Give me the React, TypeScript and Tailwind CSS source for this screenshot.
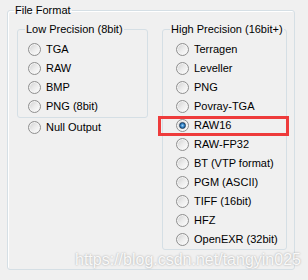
import React from 'react';

const Radio = ({ label, checked }: { label: string; checked?: boolean }) => (
  <div className="flex h-[19px] items-center gap-[5px] whitespace-nowrap">
    <span className="flex h-[13px] w-[13px] shrink-0 items-center justify-center rounded-full border border-[#8f8f8f] bg-linear-to-br from-[#cfcfcf] via-[#ececec] to-white shadow-[inset_0_0_0_1px_#f4f4f4]">
      {checked && (
        <span className="h-[7px] w-[7px] rounded-full border border-[#1f3d5c] bg-radial from-[#9fd2f5] via-[#2a80c7] to-[#174a7a]" />
      )}
    </span>
    <span>{label}</span>
  </div>
);

const low = ['TGA', 'RAW', 'BMP', 'PNG (8bit)'];
const high = [
  'Terragen',
  'Leveller',
  'PNG',
  'Povray-TGA',
  'RAW16',
  'RAW-FP32',
  'BT (VTP format)',
  'PGM (ASCII)',
  'TIFF (16bit)',
  'HFZ',
  'OpenEXR (32bit)',
];

export default function App() {
  return (
    <div className="relative h-[280px] w-[308px] overflow-hidden bg-[#f0f0f0] pt-[4px] pl-[7px] font-['Liberation_Sans',Arial,sans-serif] text-[11px] leading-[13px] text-black">
      <fieldset className="h-[266px] w-[288px] rounded-[3px] border border-[#d5dfe5] shadow-[inset_1px_1px_0_#fff]">
        <legend className="ml-[6px] px-[1px] whitespace-nowrap">File Format</legend>
        <div className="flex gap-[14px] pt-[6px] pl-[9px]">
          <div className="flex flex-col">
            <fieldset className="w-[131px] rounded-[3px] border border-[#d5dfe5]">
              <legend className="ml-[7px] px-[1px] whitespace-nowrap">Low Precision (8bit)</legend>
              <div className="pt-[4px] pb-[1px] pl-[10px]">
                {low.map((l) => (
                  <Radio key={l} label={l} />
                ))}
              </div>
            </fieldset>
            <div className="pl-[11px]">
              <Radio label="Null Output" />
            </div>
          </div>
          <fieldset className="w-[125px] rounded-[3px] border border-[#d5dfe5]">
            <legend className="ml-[7px] px-[1px] whitespace-nowrap">High Precision (16bit+)</legend>
            <div className="pt-[4px] pl-[13px]">
              {high.map((l) => (
                <Radio key={l} label={l} checked={l === 'RAW16'} />
              ))}
            </div>
          </fieldset>
        </div>
      </fieldset>

      <div className="absolute top-[116px] left-[158px] h-[20px] w-[131px] border-[3px] border-[#ee3b3b]" />

      <div className="pointer-events-none absolute top-[251px] left-[75px] font-['Liberation_Sans',Arial,sans-serif] text-[16px] leading-[18px] text-white/90 [text-shadow:0_0_2px_#9a9a9a]">
        https://blog.csdn.net/tangyin025
      </div>
    </div>
  );
}
